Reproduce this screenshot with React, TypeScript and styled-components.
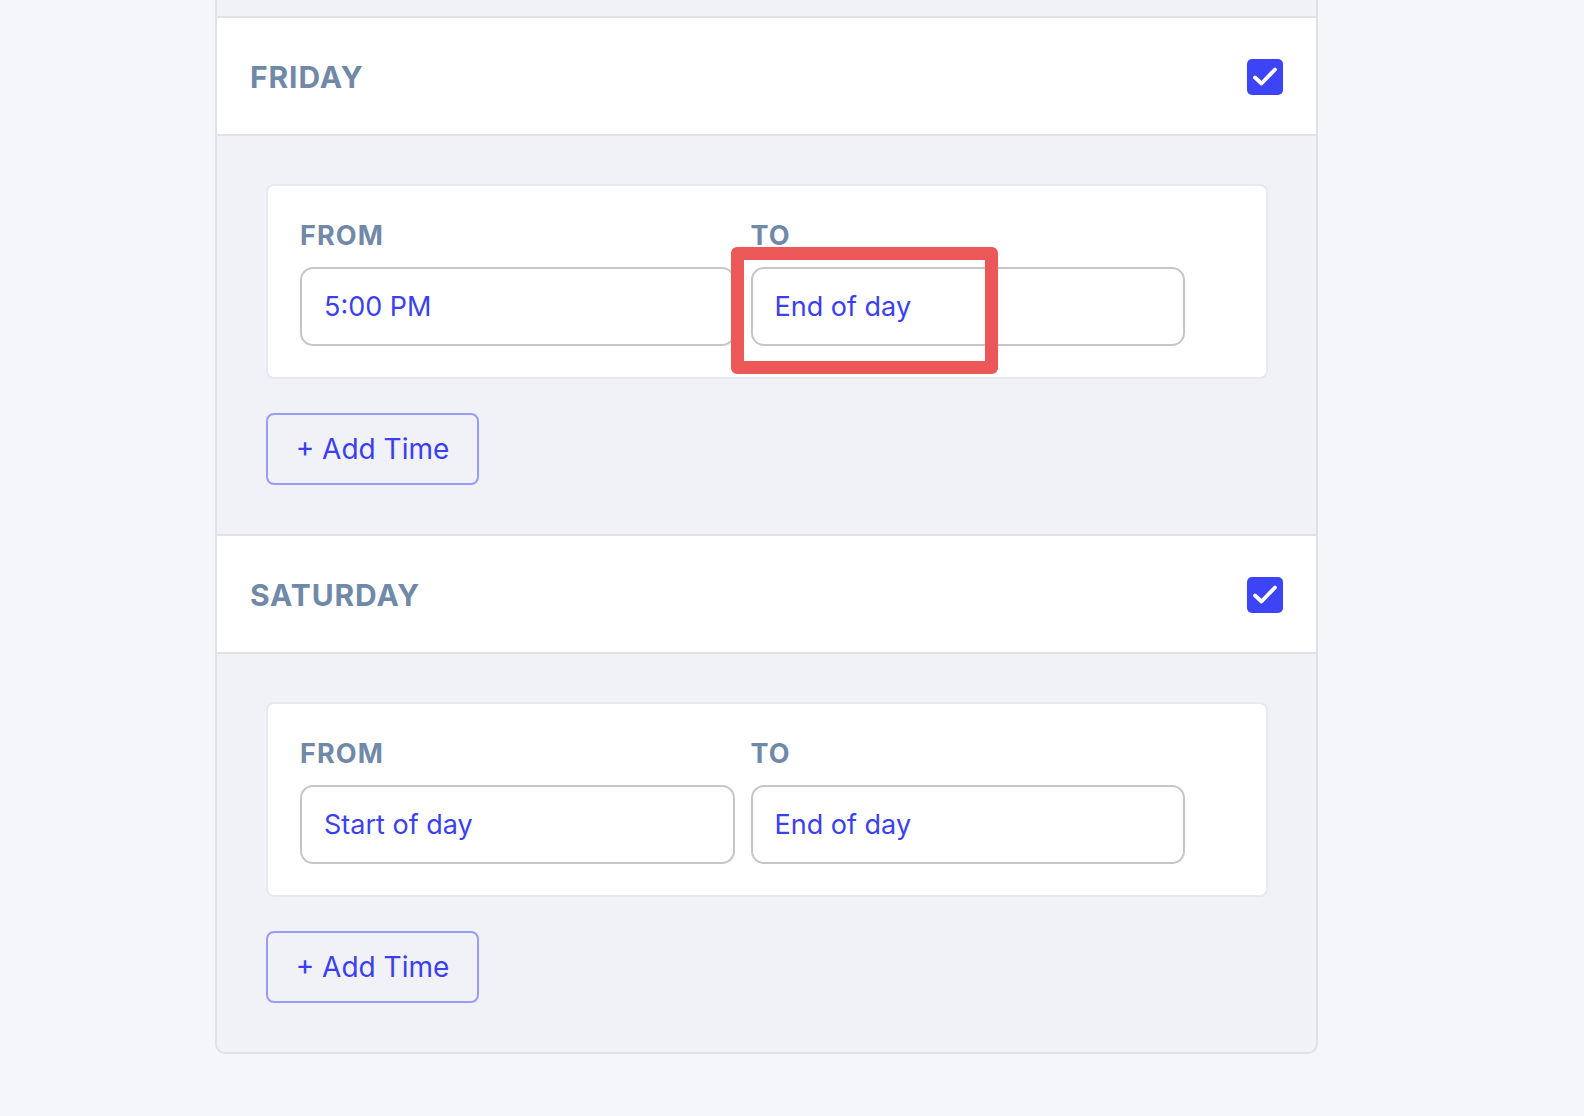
import React from "react";
import styled, { createGlobalStyle } from "styled-components";

const GlobalStyle = createGlobalStyle`
  html, body {
    margin: 0;
    padding: 0;
    background: #f5f6fa;
    font-family: Inter, "Liberation Sans", sans-serif;
  }
  * {
    box-sizing: border-box;
  }
`;

const Page = styled.div`
  width: 1584px;
  height: 1116px;
  overflow: hidden;
  padding-left: 215px;
`;

const Panel = styled.div`
  width: 1103px;
  border: 2px solid #e0e1e6;
  border-top: none;
  border-radius: 0 0 10px 10px;
  overflow: hidden;
  background: #f0f2f7;
`;

const PrevTail = styled.div`
  height: 16px;
  background: #f0f2f7;
`;

const DayHeader = styled.div`
  height: 120px;
  display: flex;
  align-items: center;
  justify-content: space-between;
  padding: 2px 33px 0;
  background: #ffffff;
  border-top: 2px solid #e1e2e6;
  border-bottom: 2px solid #e1e2e6;
`;

const DayTitle = styled.h2`
  margin: 0;
  font-size: 30px;
  font-weight: 700;
  letter-spacing: 0.9px;
  color: #7189a8;
  text-transform: uppercase;
`;

const CheckBox = styled.span`
  width: 36px;
  height: 36px;
  border-radius: 5px;
  background: #3d44f5;
  display: flex;
  align-items: center;
  justify-content: center;
`;

const DayBody = styled.div`
  height: 398px;
  padding: 48px 48px 0 49px;
  display: flex;
  flex-direction: column;
  align-items: flex-start;
  gap: 34px;
`;

const RangeCard = styled.div`
  width: 100%;
  height: 195px;
  background: #ffffff;
  border: 2px solid #e5e9f0;
  border-radius: 8px;
  padding: 34px 81px 0 32px;
  display: grid;
  grid-template-columns: 1fr 1fr;
  column-gap: 16px;
`;

const Field = styled.div`
  display: flex;
  flex-direction: column;
`;

const FieldLabel = styled.label`
  font-size: 27px;
  line-height: 31px;
  font-weight: 700;
  letter-spacing: 1.1px;
  color: #7189a8;
  margin-bottom: 16px;
`;

const InputWrap = styled.div`
  position: relative;
`;

const TimeInput = styled.div`
  height: 79px;
  border: 2px solid #c6c6c8;
  border-radius: 13px;
  padding-left: 22px;
  display: flex;
  align-items: center;
  font-size: 27px;
  color: #3b3ff0;
  background: #ffffff;
`;

const Highlight = styled.div`
  position: absolute;
  left: -20px;
  top: -20px;
  width: 267px;
  height: 127px;
  border: 13px solid #ec5757;
  border-radius: 6px;
  pointer-events: none;
`;

const AddButton = styled.button`
  height: 72px;
  width: 213px;
  border: 2px solid #999bf6;
  border-radius: 8px;
  background: transparent;
  font-family: inherit;
  font-size: 28px;
  color: #3b3ff0;
  cursor: pointer;
  padding: 0;
`;

interface DayProps {
  name: string;
  from: string;
  to: string;
  highlightTo?: boolean;
}

const Check = () => (
  <svg width="28" height="28" viewBox="0 0 28 28" fill="none">
    <path
      d="M4 14.5 L10.5 20.5 L24 6.5"
      stroke="#ffffff"
      strokeWidth="3.8"
      strokeLinecap="round"
      strokeLinejoin="round"
    />
  </svg>
);

const Day: React.FC<DayProps> = ({ name, from, to, highlightTo }) => (
  <>
    <DayHeader>
      <DayTitle>{name}</DayTitle>
      <CheckBox>
        <Check />
      </CheckBox>
    </DayHeader>
    <DayBody>
      <RangeCard>
        <Field>
          <FieldLabel>FROM</FieldLabel>
          <InputWrap>
            <TimeInput>{from}</TimeInput>
          </InputWrap>
        </Field>
        <Field>
          <FieldLabel>TO</FieldLabel>
          <InputWrap>
            <TimeInput>{to}</TimeInput>
            {highlightTo && <Highlight />}
          </InputWrap>
        </Field>
      </RangeCard>
      <AddButton>+ Add Time</AddButton>
    </DayBody>
  </>
);

export default function App() {
  return (
    <Page>
      <GlobalStyle />
      <Panel>
        <PrevTail />
        <Day name="Friday" from="5:00 PM" to="End of day" highlightTo />
        <Day name="Saturday" from="Start of day" to="End of day" />
      </Panel>
    </Page>
  );
}
